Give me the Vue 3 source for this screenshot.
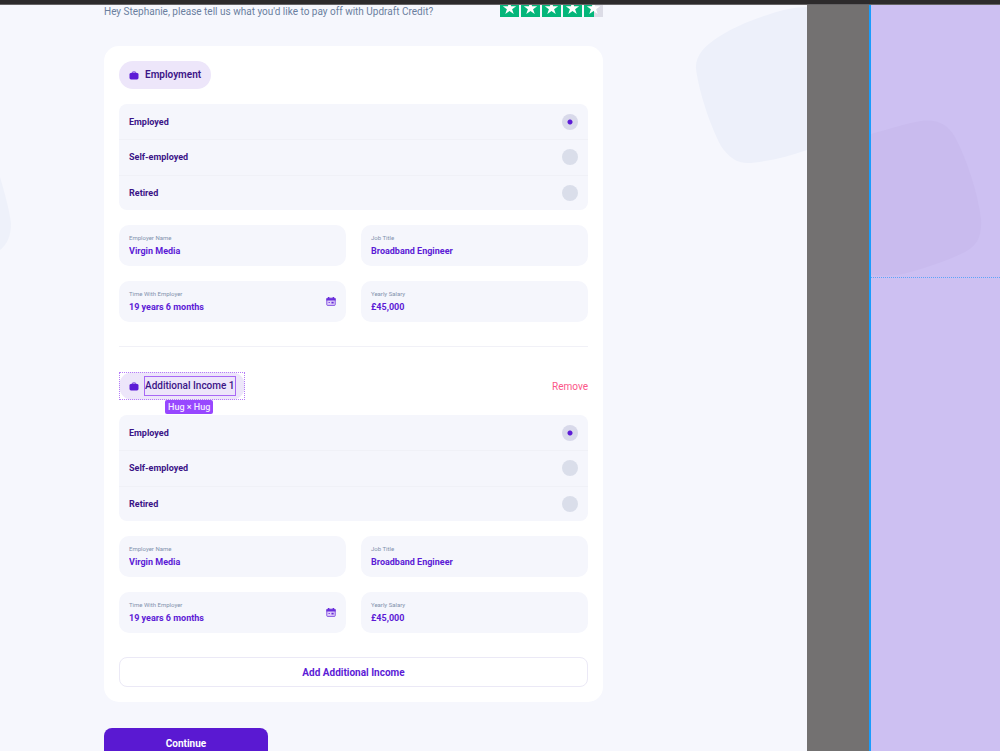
<script setup>
import { reactive } from 'vue'

const options = ['Employed', 'Self-employed', 'Retired']

const makeFields = () => [
  { id: 'employer', label: 'Employer Name', value: 'Virgin Media' },
  { id: 'job', label: 'Job Title', value: 'Broadband Engineer' },
  { id: 'time', label: 'Time With Employer', value: '19 years 6 months', calendar: true },
  { id: 'salary', label: 'Yearly Salary', value: '£45,000' }
]

const sections = reactive([
  { id: 'main', title: 'Employment', status: 'Employed', fields: makeFields() },
  { id: 'extra', title: 'Additional Income 1', status: 'Employed', fields: makeFields(), selected: true }
])

const stars = [19, 19, 19, 19, 10]
</script>

<template>
  <div class="editor">
    <div class="toolbar"></div>
    <div class="canvas">
      <main class="frame">
        <svg class="blob blob-left" viewBox="0 0 12 90" aria-hidden="true">
          <path d="M0 12C5 29 9 44 11 58C11 72 7 79 0 85Z" />
        </svg>
        <svg class="blob blob-right" viewBox="0 0 112 160" aria-hidden="true">
          <path d="M112 2C100 2 86 5 69 11C51 17 36 24 25 31C9 41 0 51 1 64C4 87 15 120 26 141C34 153 43 159 56 158C76 156 95 151 112 145Z" />
        </svg>

        <div class="content">
          <header class="intro">
            <p>Hey Stephanie, please tell us what you'd like to pay off with Updraft Credit?</p>
            <div class="stars" role="img" aria-label="Rated 4.5 out of 5">
              <svg v-for="(fill, i) in stars" :key="i" viewBox="0 0 19 19">
                <rect width="19" height="19" fill="#dcdce6" />
                <rect :width="fill" height="19" fill="#04b67a" />
                <path fill="#fff" d="M9.5 3.4L11.1 8.2H16.2L12.1 11.2L13.7 16L9.5 13L5.3 16L6.9 11.2L2.8 8.2H7.9Z" />
              </svg>
            </div>
          </header>

          <form class="card" @submit.prevent>
            <section v-for="s in sections" :key="s.id" class="section">
              <div class="section-head">
                <h2 class="pill" :class="{ selected: s.selected }">
                  <svg class="case" viewBox="0 0 10 9" aria-hidden="true">
                    <path d="M3.2 2.4V1.7Q3.2 1 3.9 1H6.1Q6.8 1 6.8 1.7V2.4" fill="none" stroke="#5c1bd6" stroke-width="1" />
                    <path d="M2 2H8Q9.5 2 9.5 3.4V6.8Q9.5 8.5 8 8.5H2Q.5 8.5 .5 6.8V3.4Q.5 2 2 2Z" fill="#5c1bd6" />
                  </svg>
                  <span class="pill-text">{{ s.title }}</span>
                  <span v-if="s.selected" class="size-tag">Hug × Hug</span>
                </h2>
                <button v-if="s.selected" type="button" class="remove">Remove</button>
              </div>

              <div class="options">
                <label v-for="o in options" :key="o" class="option">
                  <span>{{ o }}</span>
                  <input v-model="s.status" type="radio" :name="'status-' + s.id" :value="o" />
                </label>
              </div>

              <div class="fields">
                <div v-for="f in s.fields" :key="f.id" class="field">
                  <div class="field-body">
                    <label :for="s.id + '-' + f.id">{{ f.label }}</label>
                    <input :id="s.id + '-' + f.id" v-model="f.value" type="text" />
                  </div>
                  <button v-if="f.calendar" type="button" class="calendar" aria-label="Choose date">
                    <svg viewBox="0 0 9 8">
                      <path d="M1.4 1H7.6Q8.3 1 8.3 1.8V6.8Q8.3 7.5 7.6 7.5H1.4Q.7 7.5 .7 6.8V1.8Q.7 1 1.4 1Z" fill="#e0d0f9" stroke="#6a2edb" stroke-width=".7" />
                      <path d="M.4 1H8.6V3H.4ZM1.8 0H3V1.5H1.8ZM6 0H7.2V1.5H6ZM4.9 4.2H6.9V5.9H4.9ZM2.2 4.6H3.6V5.4H2.2Z" fill="#6a2edb" />
                    </svg>
                  </button>
                </div>
              </div>
            </section>

            <button type="button" class="add">Add Additional Income</button>
          </form>

          <button type="button" class="continue">Continue</button>
        </div>
      </main>

      <div class="gutter"></div>

      <aside class="overlay-frame">
        <svg class="blob blob-overlay" viewBox="0 0 112 158" aria-hidden="true">
          <path d="M0 14C18 9 36 3 50 1C67 -1 77 5 84 17C96 40 107 73 110 99C111 115 107 125 94 132C74 142 51 149 32 154C19 156 9 156 0 155Z" />
        </svg>
      </aside>
    </div>
  </div>
</template>

<style>
html,
body {
  margin: 0;
  overflow: hidden;
}
</style>

<style scoped>
.editor {
  display: flex;
  flex-direction: column;
  height: 100vh;
  font-family: Roboto, "Liberation Sans", sans-serif;
  color: #3b1487;
}

.editor *,
.editor *::before {
  box-sizing: border-box;
}

button,
input {
  margin: 0;
  padding: 0;
  border: 0;
  background: none;
  font-family: inherit;
}

svg {
  display: block;
}

.toolbar {
  flex: none;
  height: 5px;
  background: #2d2b2c;
  border-bottom: 1px solid #656365;
}

.canvas {
  display: flex;
  flex: 1;
  min-height: 0;
  overflow: hidden;
}

.frame {
  position: relative;
  flex: 1;
  min-width: 0;
  overflow: hidden;
  background: #f6f7fd;
}

.gutter {
  flex: none;
  width: 62px;
  background: #737171;
}

.overlay-frame {
  position: relative;
  flex: none;
  width: 131px;
  overflow: hidden;
  background: #cdc0f2;
  border-left: 2px solid #1b9cfc;
}

.overlay-frame::before {
  content: "";
  position: absolute;
  z-index: 1;
  top: 272px;
  left: 0;
  right: 0;
  border-top: 1px dotted #5fa4f8;
}

.blob {
  position: absolute;
}

.blob-left {
  top: 160px;
  left: 0;
  width: 12px;
  fill: #eef1fa;
}

.blob-right {
  top: 0;
  right: 0;
  width: 112px;
  fill: #edf0fa;
}

.blob-overlay {
  top: 115px;
  left: 0;
  width: 112px;
  fill: #c9bbee;
}

/* The artboard is scrolled slightly past its top edge. */
.content {
  position: relative;
  margin: -7px 204px 0 104px;
}

.intro {
  display: flex;
  justify-content: space-between;
  height: 48px;
}

.intro p {
  margin: 4px 0 0;
  font-size: 10px;
  line-height: 20px;
  color: #6b7f9f;
  white-space: nowrap;
}

.stars {
  display: flex;
  gap: 2px;
}

.stars svg {
  width: 19px;
  height: 19px;
}

.card {
  padding: 15px;
  border-radius: 15px;
  background: #fff;
}

.section {
  display: flex;
  flex-direction: column;
  gap: 15px;
  padding-bottom: 24px;
}

.section + .section {
  padding-top: 25px;
  border-top: 1px solid #f1f1f7;
}

.section-head {
  display: flex;
  align-items: center;
  justify-content: space-between;
}

.pill {
  position: relative;
  display: flex;
  align-items: center;
  gap: 6px;
  height: 28px;
  margin: 0;
  padding: 0 10px;
  border-radius: 14px;
  background: #ede6fa;
  font-size: 10px;
  font-weight: 600;
  line-height: 18px;
}

.case {
  width: 10px;
  height: 9px;
}

.selected::before {
  content: "";
  position: absolute;
  inset: 0;
  border: 1px dotted #b67cf8;
}

.selected .pill-text {
  outline: 1px solid #a868f5;
  font-weight: 500;
}

.size-tag {
  position: absolute;
  top: 28px;
  left: 46px;
  padding: 0 3px;
  border-radius: 2px;
  background: #9747ff;
  color: #f3e9ff;
  font-size: 9px;
  font-weight: 500;
  line-height: 14px;
  white-space: nowrap;
}

.remove {
  font-size: 10px;
  color: #fb5688;
}

.options {
  display: grid;
  grid-auto-rows: 1fr;
  height: 106px;
  border-radius: 8px;
  background: #f5f6fc;
}

.option {
  display: flex;
  align-items: center;
  justify-content: space-between;
  padding: 0 10px;
  font-size: 9px;
  font-weight: 700;
}

.option + .option {
  border-top: 1px solid #f0f1f7;
}

.option input {
  appearance: none;
  width: 16px;
  height: 16px;
  border-radius: 50%;
  background: #dadeea;
}

.option input:checked {
  background: radial-gradient(circle, #5c1bd6 2px, #d8d9ea 3px);
}

.fields {
  display: grid;
  grid-template-columns: 1fr 1fr;
  gap: 15px;
}

.field {
  display: flex;
  align-items: center;
  height: 41px;
  padding: 0 10px;
  border-radius: 10px;
  background: #f5f6fc;
}

.field-body {
  display: flex;
  flex: 1;
  flex-direction: column;
  min-width: 0;
}

.field label {
  font-size: 6px;
  line-height: 10px;
  color: #8292ad;
}

.field input {
  width: 100%;
  height: 15px;
  font-size: 9px;
  font-weight: 700;
  color: #5c1bd6;
}

.calendar svg {
  width: 10px;
  height: 9px;
}

.add {
  display: block;
  width: 100%;
  height: 30px;
  border: 1px solid #ebe9f6;
  border-radius: 8px;
  background: #fff;
  font-size: 10px;
  font-weight: 700;
  color: #5c1bd6;
}

.continue {
  width: 164px;
  height: 30px;
  margin-top: 26px;
  border-radius: 8px;
  background: #5a19d2;
  font-size: 10px;
  font-weight: 700;
  color: #fff;
}
</style>
